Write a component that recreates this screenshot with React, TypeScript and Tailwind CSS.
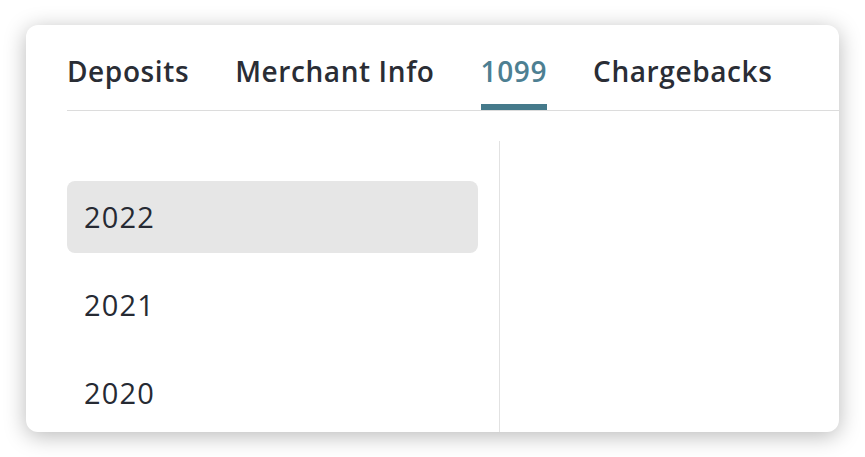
import React from "react"

const TABS = ["Deposits", "Merchant Info", "1099", "Chargebacks"]
const YEARS = ["2022", "2021", "2020"]

export default function App() {
  const active = "1099"
  const selected = "2022"
  return (
    <div className="w-[865px] h-[457px] bg-white overflow-hidden pt-[25px] pl-[26px]" style={{ fontFamily: "'Open Sans', Lato, sans-serif" }}>
      <div className="w-[813px] h-[407px] bg-white rounded-[12px] overflow-hidden shadow-[0_4px_22px_rgba(0,0,0,0.28)] pl-[41px]">
        <div className="flex gap-[46px] border-b border-[#dcdcdc] pt-[30px]">
          {TABS.map(t => (
            <div key={t} className="flex flex-col">
              <span className={`text-[28px] leading-[32px] font-semibold tracking-[0.6px] ${t === active ? "text-[#4d7f92]" : "text-[#2a2d35]"}`}>{t}</span>
              <span className={`h-[6px] mt-[17px] ${t === active ? "bg-[#457a8b]" : "bg-transparent"}`} />
            </div>
          ))}
        </div>
        <div className="flex mt-[30px] h-[400px]">
          <div className="w-[433px] border-r border-[#e2e2e2] pr-[21px] pt-10 flex flex-col gap-4">
            {YEARS.map(y => (
              <div
                key={y}
                className={`h-[72px] shrink-0 rounded-[8px] flex items-center pl-[17px] text-[29px] tracking-[1.2px] text-[#262a33] ${y === selected ? "bg-[#e6e6e6]" : ""}`}
              >
                {y}
              </div>
            ))}
          </div>
          <div className="flex-1" />
        </div>
      </div>
    </div>
  )
}
